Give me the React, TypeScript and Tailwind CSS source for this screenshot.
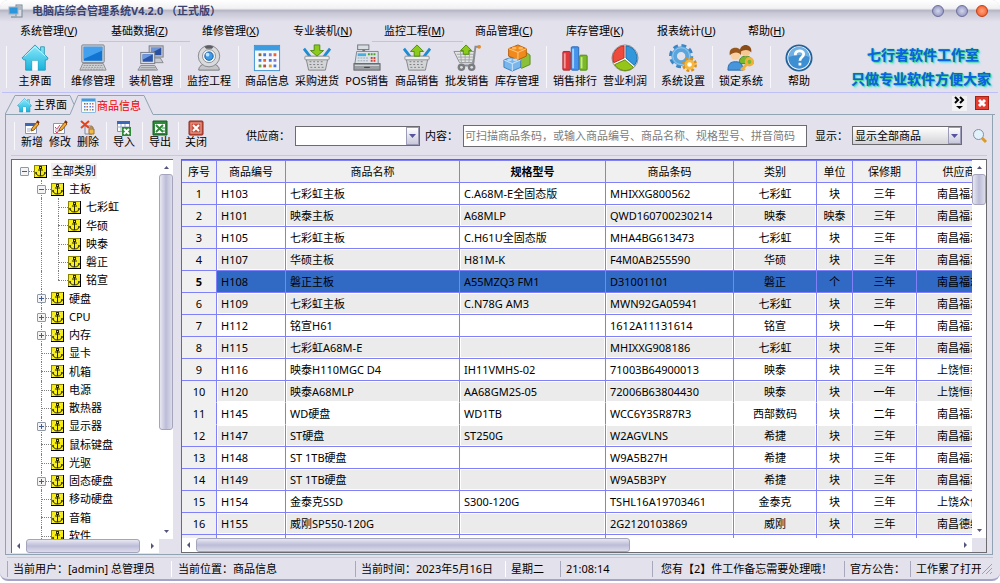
import type { ReactNode } from "react";

/* ---------- icons ---------- */

function HomeIcon({ size = 30 }: { size?: number }) {
    return (
        <svg width={size} height={size} viewBox="0 0 30 30">
            <defs>
                <linearGradient id="homeFill" x1="0" y1="0" x2="0" y2="1">
                    <stop offset="0" stopColor="#8fe9fb" />
                    <stop offset="1" stopColor="#17b3dc" />
                </linearGradient>
            </defs>
            <path d="M15 1 1 15l2 2h2v11h7V18h6v10h8V17h2l1-2-4-4V3h-4v4z" fill="url(#homeFill)" stroke="#2b9bb8" />
            <path d="M4 13 15 3l11 10" fill="none" stroke="#c9f6ff" />
            <path d="M12 18h6v10h-6z" fill="#fff" />
        </svg>
    );
}

function LaptopIcon() {
    return (
        <svg width="30" height="30" viewBox="0 0 30 30">
            <rect x="3" y="1" width="24" height="19" rx="1" fill="#cfd2d6" stroke="#7b8086" />
            <rect x="5" y="3" width="20" height="15" fill="#1173d2" />
            <path d="M5 3h20v4L5 16z" fill="#43a0ee" />
            <path d="M4 21h22l3 7H1z" fill="#d5d7da" stroke="#888" />
            <path d="M5 23h20M4 25h22M3 27h24" stroke="#8e9196" strokeDasharray="2 1" />
        </svg>
    );
}

function NetworkIcon() {
    return (
        <svg width="30" height="30" viewBox="0 0 30 30">
            <rect x="13" y="2" width="15" height="12" fill="#c3c7cf" stroke="#777c88" />
            <rect x="15" y="4" width="11" height="8" fill="#2b50a0" />
            <path d="M15 4h11l-11 6z" fill="#6f93d8" />
            <path d="M17 15h8l3 5H15z" fill="#c9cbd0" stroke="#85888f" />
            <rect x="4" y="9" width="15" height="12" fill="#dadde2" stroke="#777c88" />
            <rect x="6" y="11" width="11" height="8" fill="#2a55ab" />
            <path d="M6 11h11l-11 6z" fill="#6f9ae0" />
            <path d="M4 23h15l3 5H1z" fill="#d5d7da" stroke="#85888f" />
            <path d="M4 25h16M3 27h17" stroke="#8e9196" />
        </svg>
    );
}

function WebcamIcon() {
    return (
        <svg width="30" height="30" viewBox="0 0 30 30">
            <path d="M4 28c0-4 3-7 11-7s11 3 11 7z" fill="#c4c6c9" stroke="#77797c" />
            <circle cx="15" cy="13" r="11.500" fill="#d8dadc" stroke="#85878a" />
            <path d="M10 3c3-2 7-2 10 0l-2 2h-6z" fill="#5c5e61" />
            <circle cx="15" cy="13" r="7" fill="#f2f3f4" stroke="#8b8d90" />
            <circle cx="15" cy="13" r="4.500" fill="#3c9be8" stroke="#14599f" />
            <circle cx="13.500" cy="11.500" r="2" fill="#bfe4ff" />
        </svg>
    );
}

function GoodsIcon({ size = 30 }: { size?: number }) {
    return (
        <svg width={size} height={size} viewBox="0 0 30 30">
            <rect x="1.500" y="1.500" width="27" height="27" fill="#f4faff" stroke="#3a8fd0" />
            <rect x="2" y="2" width="26" height="5" fill="#3d9be0" />
            <path d="M6 10h3v3H6z" fill="#8c6a2b" />
            <path d="M11 10h3v3h-3zM6 16h3v3H6z" fill="#4a79d4" />
            <path d="M17 10h3v3h-3zM22 16h3v3h-3z" fill="#8a7cc0" />
            <path d="M22 10h3v3h-3zM11 16h3v3h-3z" fill="#f0622c" />
            <path d="M17 16h3v3h-3zM22 22h3v3h-3z" fill="#4676d6" />
            <path d="M6 22h3v3H6z" fill="#68a13b" />
            <path d="M11 22h3v3h-3z" fill="#b8523a" />
            <path d="M17 22h3v3h-3z" fill="#e59a22" />
        </svg>
    );
}

function BasketIcon({ up = false }: { up?: boolean }) {
    return (
        <svg width="30" height="30" viewBox="0 0 30 30">
            <path d="M3 14h24l-3 14H6z" fill="#d3d5d7" stroke="#808286" />
            <path d="M7 19h16M7 22h16M8 25h14" stroke="#77797d" strokeDasharray="2 2" />
            <path d="M1 5l7 9M29 5l-7 9" stroke="#1d8cd2" strokeWidth="3" />
            <rect x="2" y="13" width="26" height="4" rx="1" fill="#eceded" stroke="#8b8d90" />
            {up ? (
                <path d="M15 1 8 8h4v5h6V8h4z" fill="#8ccb1c" stroke="#4d8a0c" />
            ) : (
                <path d="M15 13 8 7h4V1h6v6h4z" fill="#8ccb1c" stroke="#4d8a0c" />
            )}
        </svg>
    );
}

function RegisterIcon() {
    return (
        <svg width="30" height="30" viewBox="0 0 30 30">
            <rect x="5" y="1" width="12" height="5" fill="#d9dee2" stroke="#6d747a" />
            <path d="M10 6h3v3h-3z" fill="#777" />
            <path d="M4 8h23v13H2z" fill="#dce3e8" stroke="#7b848c" />
            <rect x="5" y="10" width="9" height="3" fill="#48aee0" />
            <path d="M16 11h9" stroke="#4c9d2a" strokeWidth="2" strokeDasharray="2 1" />
            <path d="M5 15h12M5 18h12" stroke="#98a4b0" strokeDasharray="2 1" />
            <path d="M19 15h6M19 18h6" stroke="#d24234" strokeWidth="2" strokeDasharray="2 1" />
            <rect x="1" y="21" width="28" height="7" fill="#9b9fa3" stroke="#5f6468" />
            <path d="M2 23h26" stroke="#d7dadd" />
            <path d="M12 25h6" stroke="#333" />
        </svg>
    );
}

function CartIcon() {
    return (
        <svg width="30" height="30" viewBox="0 0 30 30">
            <path d="M1 8h22l-2 12H7z" fill="#e4e5e7" stroke="#898b8e" />
            <path d="M4 11h18M5 14h17M6 17h15M8 8l1 12M13 8v12M18 8l-1 12" stroke="#a0a2a5" />
            <path d="M28 3h-4l-2 17-1 3H7" fill="none" stroke="#8b8d90" strokeWidth="2" />
            <circle cx="28" cy="3" r="2" fill="#e08a2a" />
            <circle cx="9" cy="25" r="4" fill="#7a7d80" />
            <circle cx="20" cy="25" r="4" fill="#7a7d80" />
            <circle cx="9" cy="25" r="1.500" fill="#ddd" />
            <circle cx="20" cy="25" r="1.500" fill="#ddd" />
            <path d="M14 1 8 7h3v4h6V7h3z" fill="#8ccb1c" stroke="#4d8a0c" />
        </svg>
    );
}

function BricksIcon() {
    return (
        <svg width="30" height="30" viewBox="0 0 30 30">
            <path d="M16 13l9-4 4 3v10l-9 4-4-3z" fill="#8cbf3a" stroke="#5b8b1c" />
            <path d="M1 17l9-3 9 3v8l-9 4-9-4z" fill="#79b6ec" stroke="#3b7fc0" />
            <path d="M1 17l9 4 9-4M10 21v8" fill="none" stroke="#d4ebff" />
            <path d="M6 5l10-4 9 4v8l-9 4-10-4z" fill="#f08a1c" stroke="#b85c0a" />
            <path d="M6 5l10 4 9-4M16 9v8" fill="none" stroke="#ffd08c" />
            <ellipse cx="12" cy="4.500" rx="2.500" ry="1.500" fill="#ffb658" />
            <ellipse cx="19" cy="4.500" rx="2.500" ry="1.500" fill="#ffb658" />
            <ellipse cx="7" cy="17" rx="2.500" ry="1.500" fill="#b8dcfa" />
            <ellipse cx="13" cy="17" rx="2.500" ry="1.500" fill="#b8dcfa" />
        </svg>
    );
}

function BarsIcon() {
    return (
        <svg width="30" height="30" viewBox="0 0 30 30">
            <rect x="2" y="8" width="8" height="20" rx="1" fill="#e0393c" stroke="#a82528" />
            <path d="M4 10v16" stroke="#f79a9b" strokeWidth="2" />
            <rect x="11" y="3" width="8" height="25" rx="1" fill="#4594ec" stroke="#2566b8" />
            <path d="M13 5v21" stroke="#a6d0ff" strokeWidth="2" />
            <rect x="20" y="12" width="8" height="16" rx="1" fill="#7cb928" stroke="#4f8412" />
            <path d="M22 14v12" stroke="#c6e892" strokeWidth="2" />
        </svg>
    );
}

function PieIcon() {
    return (
        <svg width="30" height="30" viewBox="0 0 30 30">
            <circle cx="15" cy="15" r="14" fill="#fff" stroke="#8c8c8c" />
            <path d="M14 15V2A13 13 0 0 0 3 20z" fill="#ee4b3c" stroke="#b82c20" />
            <path d="M16 15V2a13 13 0 0 1 9 21z" fill="#3397dc" stroke="#1b6ba8" />
            <path d="M15 17 4 22a13 13 0 0 0 20 3z" fill="#96c51a" stroke="#618a08" />
        </svg>
    );
}

function GearsIcon() {
    return (
        <svg width="30" height="30" viewBox="0 0 30 30">
            <circle cx="13" cy="13" r="11" fill="none" stroke="#3b86c6" strokeWidth="4" strokeDasharray="5 3.640" />
            <circle cx="13" cy="13" r="7.500" fill="none" stroke="#5ba5dd" strokeWidth="6" />
            <circle cx="13" cy="13" r="9" fill="none" stroke="#9acbf0" />
            <circle cx="22" cy="22" r="6.500" fill="none" stroke="#dc8f14" strokeWidth="3" strokeDasharray="3 2.100" />
            <circle cx="22" cy="22" r="4" fill="#fff" stroke="#f6b73c" strokeWidth="3" />
        </svg>
    );
}

function UsersIcon() {
    return (
        <svg width="30" height="30" viewBox="0 0 30 30">
            <path d="M13 21c0-5 2-8 7-8s8 3 8 8z" fill="#79b72c" stroke="#4d8412" />
            <circle cx="20" cy="8" r="5" fill="#f5c896" />
            <path d="M14 9c-1-6 3-8 6-8s7 2 6 8c-2-3-8-4-12 0z" fill="#8a4d18" />
            <path d="M1 28c0-7 3-9 8-9s8 2 8 9z" fill="#4796dc" stroke="#2767a8" />
            <circle cx="9" cy="12" r="5" fill="#f8d0a2" />
            <path d="M3 12c-1-6 2-8 6-8s7 2 6 8c-2-4-8-4-12 0z" fill="#96561d" />
            <circle cx="24" cy="19" r="3.500" fill="none" stroke="#f0b03c" strokeWidth="3" />
            <path d="M21 22l-6 6m2-2 2 2" stroke="#f0b03c" strokeWidth="3" />
        </svg>
    );
}

function HelpIcon() {
    return (
        <svg width="30" height="30" viewBox="0 0 30 30">
            <circle cx="15" cy="15" r="13.500" fill="#fff" stroke="#24629c" strokeWidth="2" />
            <circle cx="15" cy="15" r="11.500" fill="#3e8fd2" />
            <path d="M4 14a11 11 0 0 1 22 0c-6-3-14-3-22 0z" fill="#6db1e6" />
            <path d="M11 12c0-6 9-6 9-1 0 3-4 3-4 7M16 20v3" fill="none" stroke="#fff" strokeWidth="3" />
        </svg>
    );
}

function EditIcon({ kind }: { kind: "add" | "edit" | "delete" }) {
    return (
        <svg width="16" height="16" viewBox="0 0 16 16">
            {kind === "delete" ? (
                <>
                    <path d="M5 6h7v8H5z" fill="#e4e6f0" stroke="#7c86a8" />
                    <path d="M9 9h5v5H9z" fill="#f0bc4c" stroke="#a8701c" />
                    <path d="M10 9V7h3v2" fill="none" stroke="#a8701c" />
                    <path d="M1 1l8 7M9 1 1 8" stroke="#e6421a" strokeWidth="2" />
                </>
            ) : (
                <>
                    <path d="M1.500 3.500h11v10h-11z" fill="#fff" stroke="#8a94b8" />
                    {kind === "add" ? (
                        <path d="M1 3h12v3H1z" fill="#3f66b4" />
                    ) : (
                        <path d="M3 7l2 2 3-4M3 11l2 2 3-4" fill="none" stroke="#d8345c" />
                    )}
                    <path d="M3 9h4M3 11h3" stroke="#a4b0cc" />
                    <path d="M7 11 8 8l5-6 2 2-5 6z" fill="#f2ac38" stroke="#8c5416" />
                    <path d="M13 1l2 2" stroke="#7c2a10" strokeWidth="2" />
                </>
            )}
        </svg>
    );
}

function SheetIcon({ importing = false }: { importing?: boolean }) {
    return (
        <svg width="16" height="16" viewBox="0 0 16 16">
            {importing ? (
                <>
                    <path d="M1.500 1.500h12v10h-12z" fill="#fff" stroke="#7f93b8" />
                    <path d="M1 1h13v3H1z" fill="#3968b8" />
                    <path d="M1 7h12M5 4v8M9 4v8" stroke="#9caccb" />
                    <path d="M6 7h9v9H6z" fill="#2f8a3a" />
                    <path d="M8 9l5 5M13 9l-5 5" stroke="#fff" strokeWidth="2" />
                </>
            ) : (
                <>
                    <path d="M1 1h14v14H1z" fill="#2f8a3a" stroke="#1b5a24" />
                    <path d="M3 4h10v9H3z" fill="#fff" />
                    <path d="M4 5l7 7M11 5l-7 7" stroke="#2f8a3a" strokeWidth="2" />
                    <path d="M10 8h3M10 11h3" stroke="#2f8a3a" />
                </>
            )}
        </svg>
    );
}

function CloseIcon() {
    return (
        <svg width="16" height="16" viewBox="0 0 16 16">
            <rect x="1" y="1" width="14" height="14" rx="1" fill="#c8503e" stroke="#8c2a1c" />
            <rect x="3" y="3" width="10" height="10" fill="none" stroke="#eba698" />
            <path d="M5 5l6 6M11 5l-6 6" stroke="#fff" strokeWidth="2" />
        </svg>
    );
}

function AnchorIcon() {
    return (
        <svg width="13" height="13" viewBox="0 0 13 13" className="shrink-0">
            <rect width="13" height="13" fill="#000" />
            <rect width="12" height="12" fill="#8c8400" />
            <rect x="1" y="1" width="11" height="11" fill="#f4ec10" />
            <path d="M1 12 12 1M1 6l5-5M7 12l5-5" stroke="#fbf8a0" strokeDasharray="1 1" />
            <path d="M6.500 3v8M4 5h5M2 7c0 3 2 4 4.500 4S11 10 11 7M2 7v2M11 7v2" fill="none" stroke="#2a2600" />
            <path d="M5 1h3v3H5z" fill="#2a2600" />
            <path d="M6 2h1v1H6z" fill="#f4ec10" />
        </svg>
    );
}

function AppIcon() {
    return (
        <svg width="15" height="15" viewBox="0 0 15 15">
            <rect x="8" y="1" width="6" height="12" fill="#d8dde4" stroke="#7a8694" />
            <path d="M9 3h4M9 5h4" stroke="#8894a4" />
            <rect x="1" y="3" width="9" height="7" fill="#2c96dc" stroke="#a4b4c4" />
            <path d="M3 12h6v2H3z" fill="#9caab8" />
        </svg>
    );
}

function SearchIcon() {
    return (
        <svg width="16" height="16" viewBox="0 0 16 16">
            <circle cx="6.500" cy="6.500" r="5" fill="#e2f2fc" stroke="#8290a4" />
            <path d="M10 10l4 4" stroke="#dc9c24" strokeWidth="3" />
        </svg>
    );
}

/* ---------- data ---------- */

const menus = [
    ["系统管理", "V"],
    ["基础数据", "Z"],
    ["维修管理", "X"],
    ["专业装机", "N"],
    ["监控工程", "M"],
    ["商品管理", "C"],
    ["库存管理", "K"],
    ["报表统计", "U"],
    ["帮助", "H"],
];

const toolGroups: { label: string; icon: ReactNode }[][] = [
    [{ label: "主界面", icon: <HomeIcon /> }],
    [{ label: "维修管理", icon: <LaptopIcon /> }],
    [{ label: "装机管理", icon: <NetworkIcon /> }],
    [{ label: "监控工程", icon: <WebcamIcon /> }],
    [
        { label: "商品信息", icon: <GoodsIcon /> },
        { label: "采购进货", icon: <BasketIcon /> },
        { label: "POS销售", icon: <RegisterIcon /> },
        { label: "商品销售", icon: <BasketIcon up /> },
        { label: "批发销售", icon: <CartIcon /> },
        { label: "库存管理", icon: <BricksIcon /> },
    ],
    [
        { label: "销售排行", icon: <BarsIcon /> },
        { label: "营业利润", icon: <PieIcon /> },
    ],
    [{ label: "系统设置", icon: <GearsIcon /> }],
    [{ label: "锁定系统", icon: <UsersIcon /> }],
    [{ label: "帮助", icon: <HelpIcon /> }],
];

const actionGroups: { label: string; icon: ReactNode }[][] = [
    [
        { label: "新增", icon: <EditIcon kind="add" /> },
        { label: "修改", icon: <EditIcon kind="edit" /> },
        { label: "删除", icon: <EditIcon kind="delete" /> },
    ],
    [{ label: "导入", icon: <SheetIcon importing /> }],
    [{ label: "导出", icon: <SheetIcon /> }],
    [{ label: "关闭", icon: <CloseIcon /> }],
];

type TreeNode = { label: string; level: 0 | 1 | 2; sign?: "+" | "-" };

const tree: TreeNode[] = [
    { label: "全部类别", level: 0, sign: "-" },
    { label: "主板", level: 1, sign: "-" },
    { label: "七彩虹", level: 2 },
    { label: "华硕", level: 2 },
    { label: "映泰", level: 2 },
    { label: "磐正", level: 2 },
    { label: "铭宣", level: 2 },
    { label: "硬盘", level: 1, sign: "+" },
    { label: "CPU", level: 1, sign: "+" },
    { label: "内存", level: 1, sign: "+" },
    { label: "显卡", level: 1 },
    { label: "机箱", level: 1 },
    { label: "电源", level: 1 },
    { label: "散热器", level: 1 },
    { label: "显示器", level: 1, sign: "+" },
    { label: "鼠标键盘", level: 1 },
    { label: "光驱", level: 1 },
    { label: "固态硬盘", level: 1, sign: "+" },
    { label: "移动硬盘", level: 1 },
    { label: "音箱", level: 1 },
    { label: "软件", level: 1 },
];

const columns = ["序号", "商品编号", "商品名称", "规格型号", "商品条码", "类别", "单位", "保修期", "供应商"];

const rows = [
    ["H103", "七彩虹主板", "C.A68M-E全固态版", "MHIXXG800562", "七彩虹", "块", "三年", "南昌福志"],
    ["H101", "映泰主板", "A68MLP", "QWD160700230214", "映泰", "映泰", "三年", "南昌福志"],
    ["H105", "七彩虹主板", "C.H61U全固态版", "MHA4BG613473", "七彩虹", "块", "三年", "南昌福志"],
    ["H107", "华硕主板", "H81M-K", "F4M0AB255590", "华硕", "块", "三年", "南昌福志"],
    ["H108", "磐正主板", "A55MZQ3 FM1", "D31001101", "磐正", "个", "三年", "南昌福志"],
    ["H109", "七彩虹主板", "C.N78G AM3", "MWN92GA05941", "七彩虹", "块", "三年", "南昌福志"],
    ["H112", "铭宣H61", "", "1612A11131614", "铭宣", "块", "一年", "南昌福志"],
    ["H115", "七彩虹A68M-E", "", "MHIXXG908186", "七彩虹", "块", "三年", "南昌福志"],
    ["H116", "映泰H110MGC D4", "IH11VMHS-02", "71003B64900013", "映泰", "块", "三年", "上饶恒泰"],
    ["H120", "映泰A68MLP", "AA68GM2S-05", "72006B63804430", "映泰", "块", "一年", "上饶恒泰"],
    ["H145", "WD硬盘", "WD1TB", "WCC6Y3SR87R3", "西部数码", "块", "二年", "南昌福志"],
    ["H147", "ST硬盘", "ST250G", "W2AGVLNS", "希捷", "块", "三年", "南昌福志"],
    ["H148", "ST 1TB硬盘", "", "W9A5B27H", "希捷", "块", "三年", "南昌福志"],
    ["H149", "ST 1TB硬盘", "", "W9A5B3PY", "希捷", "块", "三年", "南昌福志"],
    ["H154", "金泰克SSD", "S300-120G", "TSHL16A19703461", "金泰克", "块", "三年", "上饶众信"],
    ["H155", "威刚SP550-120G", "", "2G2120103869", "威刚", "块", "三年", "南昌德维"],
];

/* rows whose lower rule is hidden */
const openRows = [10, 11];
const selectedRow = 5;

/* ---------- pieces ---------- */

function Separator() {
    return (
        <div className="flex w-2 shrink-0 justify-center py-1">
            <span className="w-px bg-[#f8f8fc]" />
        </div>
    );
}

function TitleBar() {
    return (
        <header className="flex h-[22px] shrink-0 items-center rounded-t-lg bg-[linear-gradient(to_bottom,#ffffff_0%,#f2f2f5_38%,#b6b6c4_48%,#c8c8d6_60%,#e3e1ec_100%)] pl-2 pr-3">
            <AppIcon />
            <h1 className="ml-[9px] flex-1 whitespace-nowrap font-bold text-[#39416f]">电脑店综合管理系统V4.2.0 （正式版）</h1>
            <div className="flex items-center gap-2">
                <button aria-label="最小化" className="mr-1 size-3 rounded-full border border-[#6a6e9c] bg-radial from-[#d4d6ee] to-[#8488b4]" />
                <button aria-label="最大化" className="size-3 rounded-full border border-[#6a6e9c] bg-radial from-[#d4d6ee] to-[#8488b4]" />
                <button aria-label="关闭" className="size-3 rounded-full border border-[#c43a10] bg-radial from-[#ffa47c] to-[#ee4a14]" />
            </div>
        </header>
    );
}

function MenuBar() {
    return (
        <nav className="flex h-5 shrink-0 pl-2">
            {menus.map(([label, key]) => (
                <button
                    key={key}
                    className={`w-[91px] whitespace-nowrap border-b pb-px pl-3 text-left ${key === "Z" || key === "M" ? "border-[#c0c0f4]" : "border-transparent"}`}
                >
                    {label}(<span className="underline">{key}</span>)
                </button>
            ))}
        </nav>
    );
}

function ToolBar() {
    return (
        <div className="mx-[2px] flex h-[51px] shrink-0 border-b border-[#c0c0f8]">
            {toolGroups.map((group) => (
                <div key={group[0].label} className="flex">
                    <Separator />
                    {group.map((tool) => (
                        <button key={tool.label} className="flex w-[50px] flex-col items-center gap-px whitespace-nowrap pt-[2px] [&>svg]:size-7">
                            {tool.icon}
                            <span className="leading-4">{tool.label}</span>
                        </button>
                    ))}
                </div>
            ))}
            <div className="flex flex-1 flex-col items-end whitespace-nowrap pr-[7px] pt-px text-sm leading-6 font-bold text-[#0a62e4] [text-shadow:0_0_1px_#2cc43c,1px_1px_0_#58d8a0,2px_2px_2px_#6ce0ff]">
                <p className="pr-3">七行者软件工作室</p>
                <p>只做专业软件方便大家</p>
            </div>
        </div>
    );
}

function TabStrip() {
    return (
        <div className="flex h-[22px] shrink-0 items-end px-[5px]">
            <svg width="10" height="20" fill="none" stroke="#8fa3b3">
                <path d="M0 19.500 10 .5M0 19.500h10" />
            </svg>
            <button className="flex h-5 items-center gap-[2px] border-y border-[#8fa3b3] pl-[2px] pr-[3px]">
                <HomeIcon size={15} />
                主界面
            </button>
            <svg width="8" height="20" fill="none" stroke="#8fa3b3">
                <path d="M0 .5l4 9M0 19.500 8 .5" />
            </svg>
            <button className="flex h-5 items-center gap-px border-t border-[#8fa3b3] px-[3px] text-[#f00000]">
                <GoodsIcon size={15} />
                商品信息
            </button>
            <svg width="9" height="20" fill="none" stroke="#8fa3b3">
                <path d="M0 .5l9 19" />
            </svg>
            <div className="flex h-5 flex-1 items-center justify-end gap-2 border-b border-[#8fa3b3] pb-[3px]">
                <button aria-label="更多" className="bg-[#f2f2f4]">
                    <svg width="15" height="15" fill="none" stroke="#000">
                        <path d="M3 1l3 3-3 3M8 1l3 3-3 3" strokeWidth="2" />
                        <path d="M4 10h7l-3.500 3z" fill="#000" stroke="none" />
                    </svg>
                </button>
                <button aria-label="关闭标签" className="mr-[6px] border border-[#a82014] bg-[#e43c30]">
                    <svg width="12" height="12" stroke="#fff" strokeWidth="3">
                        <path d="M3 3l6 6M9 3l-6 6" />
                    </svg>
                </button>
            </div>
        </div>
    );
}

function DropArrow() {
    return (
        <span className="pointer-events-none absolute inset-y-px right-px flex w-[13px] items-center justify-center border border-[#9c9cb8] bg-linear-to-b from-white to-[#c8c8dc]">
            <svg width="7" height="4">
                <path d="M0 0h7L3.500 4z" fill="#5454a0" />
            </svg>
        </span>
    );
}

function FilterBar() {
    return (
        <div className="flex h-10 shrink-0 items-center pl-1 pr-1 pt-px">
            {actionGroups.map((group) => (
                <div key={group[0].label} className="flex h-9">
                    <Separator />
                    {group.map((action) => (
                        <button key={action.label} className="flex w-7 flex-col items-center whitespace-nowrap pt-[2px]">
                            {action.icon}
                            <span className="leading-3">{action.label}</span>
                        </button>
                    ))}
                </div>
            ))}
            <Separator />
            <label htmlFor="supplier" className="ml-7 w-[49px] shrink-0 whitespace-nowrap">供应商：</label>
            <div className="relative w-[125px] shrink-0">
                <select id="supplier" className="block h-5 w-full appearance-none border border-[#6c6c70] bg-white px-1">
                    <option></option>
                </select>
                <DropArrow />
            </div>
            <label htmlFor="keyword" className="ml-[5px] w-[38px] shrink-0 whitespace-nowrap">内容：</label>
            <input
                id="keyword"
                type="text"
                placeholder="可扫描商品条码，或输入商品编号、商品名称、规格型号、拼音简码"
                className="h-[22px] min-w-0 flex-1 border border-[#6c6c70] bg-white px-px placeholder:text-[#7c7c7c]"
            />
            <label htmlFor="show" className="ml-2 w-[37px] shrink-0 whitespace-nowrap">显示：</label>
            <div className="relative w-[110px] shrink-0">
                <select id="show" className="block h-[19px] w-full appearance-none border border-[#6c6c70] bg-linear-to-b from-white to-[#d4d4d8] px-[2px]">
                    <option>显示全部商品</option>
                </select>
                <DropArrow />
            </div>
            <button aria-label="搜索" className="ml-[10px] shrink-0">
                <SearchIcon />
            </button>
        </div>
    );
}

function VScroll({ thumb }: { thumb: string }) {
    return (
        <div className="flex w-[14px] shrink-0 flex-col items-center bg-white">
            <svg width="5" height="14" className="shrink-0">
                <path d="M0 9h5L2.500 6z" fill="#54547c" />
            </svg>
            <div className="w-full flex-1">
                <div className={`rounded-[3px] border border-[#a4a4bc] bg-linear-to-r from-[#e8e8f2] via-[#bcbcd8] to-[#dcdcea] ${thumb}`} />
            </div>
            <svg width="5" height="14" className="shrink-0">
                <path d="M0 5h5L2.500 8z" fill="#54547c" />
            </svg>
        </div>
    );
}

function HScroll({ thumb }: { thumb: string }) {
    return (
        <div className="flex h-[14px] shrink-0">
            <svg width="14" height="14" className="shrink-0">
                <path d="M8 4v6L5 7z" fill="#54547c" />
            </svg>
            <div className="flex-1">
                <div className={`h-full rounded-[3px] border border-[#a4a4bc] bg-linear-to-b from-[#e8e8f2] via-[#bcbcd8] to-[#dcdcea] ${thumb}`} />
            </div>
            <svg width="14" height="14" className="shrink-0">
                <path d="M6 4v6l3-3z" fill="#54547c" />
            </svg>
            <span className="w-[14px] bg-[#e3e1ec]" />
        </div>
    );
}

function TreeRow({ node, index }: { node: TreeNode; index: number }) {
    const dotted = "border-dotted border-[#808080]";
    return (
        <li className="flex h-[18px] items-stretch whitespace-nowrap nth-[4n]:h-[19px]">
            {node.level > 0 && <span className="w-[17px] shrink-0" />}
            {node.level === 2 && <span className={`ml-2 w-[9px] shrink-0 border-l ${dotted}`} />}
            <span className="relative flex w-[18px] shrink-0 items-center">
                {index > 0 && <span className={`absolute left-2 top-0 border-l ${dotted} ${index === 6 ? "h-1/2" : "h-full"}`} />}
                <span className={`absolute left-2 right-0 border-t ${dotted}`} />
                {node.sign && (
                    <button
                        aria-label={node.sign === "+" ? `展开${node.label}` : `收起${node.label}`}
                        className="relative ml-1 size-[9px] rounded-[1px] border border-[#9098a8] bg-[#f4f4f4]"
                    >
                        <svg width="7" height="7" stroke="#3c5c9c">
                            <path d={node.sign === "+" ? "M1 3.500h5M3.500 1v5" : "M1 3.500h5"} />
                        </svg>
                    </button>
                )}
            </span>
            <span className="flex items-center">
                <AnchorIcon />
                <button className={`ml-1 px-px ${node.level === 0 ? "bg-[#f0f0f0]" : ""}`}>{node.label}</button>
            </span>
        </li>
    );
}

function CategoryTree() {
    return (
        <aside className="flex w-[162px] shrink-0 flex-col border-l border-t border-[#6c6c70] bg-white">
            <div className="flex min-h-0 flex-1">
                <ul className="min-w-0 flex-1 overflow-hidden pl-1 pt-[2px]">
                    {tree.map((node, index) => (
                        <TreeRow key={node.label} node={node} index={index} />
                    ))}
                </ul>
                <VScroll thumb="h-[73%]" />
            </div>
            <HScroll thumb="w-[96%]" />
        </aside>
    );
}

function GoodsTable() {
    return (
        <section className="flex min-w-0 flex-1 flex-col border border-[#6c6c70] bg-white">
            <div className="flex min-h-0 flex-1">
                <div className="min-w-0 flex-1 overflow-hidden">
                    <table className="w-full min-w-[820px] table-fixed border-separate border-spacing-0 border-t border-[#8080f8]">
                        <colgroup>
                            <col className="w-[35px]" />
                            <col className="w-[69px]" />
                            <col className="w-[174px]" />
                            <col className="w-[146px]" />
                            <col className="w-[128px]" />
                            <col className="w-[83px]" />
                            <col className="w-9" />
                            <col className="w-16" />
                            <col />
                        </colgroup>
                        <thead>
                            <tr className="h-[22px] bg-[#f0f0f0]">
                                {columns.map((column) => (
                                    <th key={column} className={`border-b border-r border-[#8080f8] p-0 ${column === "规格型号" ? "font-bold" : "font-normal"}`}>
                                        {column}
                                    </th>
                                ))}
                            </tr>
                        </thead>
                        <tbody>
                            {rows.map((row, index) => {
                                const number = index + 1;
                                const selected = number === selectedRow;
                                const rule = openRows.includes(number) ? "border-b-transparent" : "";
                                const fill = selected ? "bg-[#316ac5]" : number % 2 === 0 ? "bg-[#ebebeb]" : "bg-white";
                                return (
                                    <tr key={row[0]} className="h-[22px]">
                                        <th className={`border-b border-r border-[#8080f8] bg-[#f0f0f0] p-0 ${rule} ${selected ? "font-bold" : "font-normal"}`}>{number}</th>
                                        {row.map((cell, column) => (
                                            <td key={column} className={`border-b border-r border-[#8080f8] p-px ${rule} ${selected ? "bg-[#316ac5]" : ""}`}>
                                                <div className={`h-[19px] overflow-hidden whitespace-nowrap leading-5 ${fill} ${column < 4 ? "pl-[3px]" : "text-center"}`}>{cell}</div>
                                            </td>
                                        ))}
                                    </tr>
                                );
                            })}
                            <tr aria-hidden="true" className="h-[22px]">
                                {columns.map((column) => (
                                    <td key={column} className="border-r border-[#8080f8] first:bg-[#f0f0f0]" />
                                ))}
                            </tr>
                        </tbody>
                    </table>
                </div>
                <VScroll thumb="h-[31px]" />
            </div>
            <HScroll thumb="w-[57%]" />
        </section>
    );
}

function StatusBar() {
    const cell = "shrink-0 border-l border-[#a8a8bc] pl-[5px]";
    return (
        <footer className="mx-[7px] mt-[2px] flex h-[22px] shrink-0 items-center overflow-hidden whitespace-nowrap border-t border-[#c8c8d6] leading-4">
            <span className={`w-[164px] ${cell}`}>当前用户：[admin] 总管理员</span>
            <span className="min-w-0 flex-1 border-l border-white pl-[6px]">当前位置：商品信息</span>
            <span className={`w-[150px] ${cell}`}>当前时间：2023年5月16日</span>
            <span className="w-[55px] shrink-0 border-l border-white pl-[5px]">星期二</span>
            <span className={`w-[92px] ${cell}`}>21:08:14</span>
            <span className="w-[192px] shrink-0 border-l border-[#a8a8bc] pl-2">您有【2】件工作备忘需要处理哦！</span>
            <span className={`w-[66px] ${cell}`}>官方公告：</span>
            <span className={`w-[71px] overflow-hidden ${cell}`}>工作累了打开</span>
            <svg width="12" height="12" stroke="#a0a0b4" className="shrink-0">
                <path d="M1 11 11 1M5 11l6-6M9 11l2-2" />
            </svg>
        </footer>
    );
}

export default function App() {
    return (
        <div lang="zh-CN" className="h-screen bg-white pb-[2px] font-['Noto_Sans','Noto_Sans_CJK_SC',sans-serif] text-[11px] leading-4 text-black">
            <div className="flex h-full flex-col overflow-hidden rounded-lg border-b-2 border-[#a4a4c8] bg-[#e3e1ec]">
                <TitleBar />
                <MenuBar />
                <ToolBar />
                <TabStrip />
                <main className="ml-[5px] mr-[7px] flex min-h-0 flex-1 flex-col border-x border-b border-[#8fa3b3]">
                    <FilterBar />
                    <div className="mx-[5px] mb-px flex min-h-0 flex-1 gap-2 border-t border-[#c8c8d6] pt-[3px]">
                        <CategoryTree />
                        <GoodsTable />
                    </div>
                </main>
                <StatusBar />
            </div>
        </div>
    );
}
